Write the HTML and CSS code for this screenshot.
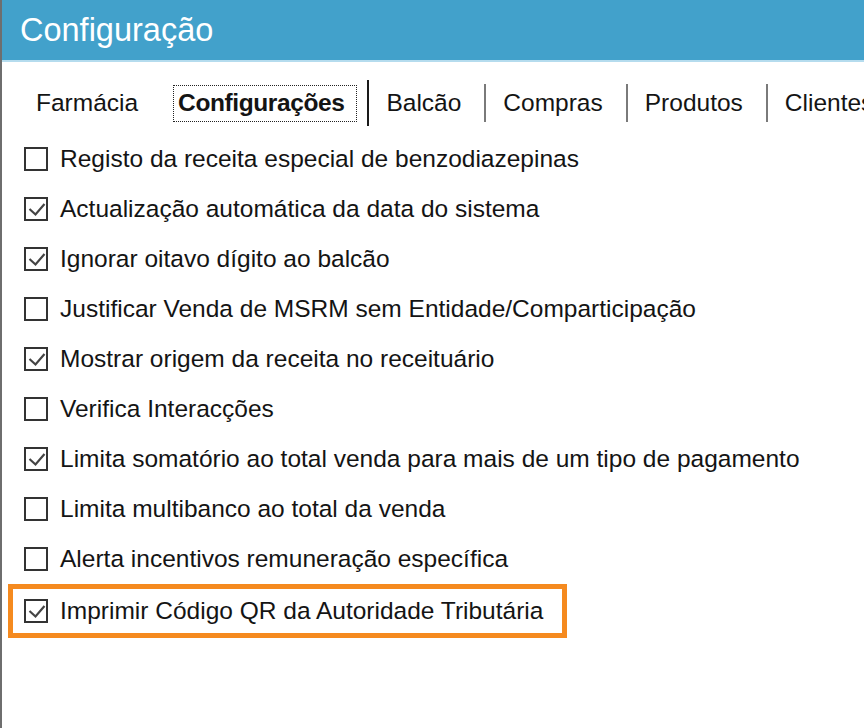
FILE: index.html
```html
<!DOCTYPE html>
<html lang="pt">
<head>
<meta charset="utf-8">
<title>Configuração</title>
<link rel="stylesheet" href="styles.css">
</head>
<body>
<div class="window">
  <header class="titlebar">Configuração</header>
  <nav class="tabs">
    <span class="tab first">Farmácia</span>
    <span class="tab active"><span class="focus">Configurações</span></span>
    <span class="sep dark"></span>
    <span class="tab">Balcão</span>
    <span class="sep"></span>
    <span class="tab">Compras</span>
    <span class="sep"></span>
    <span class="tab">Produtos</span>
    <span class="sep"></span>
    <span class="tab">Clientes</span>
  </nav>
  <ul class="options">
    <li class="opt"><span class="box"></span><span class="label">Registo da receita especial de benzodiazepinas</span></li>
    <li class="opt"><span class="box checked"><svg viewBox="0 0 20 20"><polyline points="3.5,10 9.5,15.5 18.5,5"/></svg></span><span class="label">Actualização automática da data do sistema</span></li>
    <li class="opt"><span class="box checked"><svg viewBox="0 0 20 20"><polyline points="3.5,10 9.5,15.5 18.5,5"/></svg></span><span class="label">Ignorar oitavo dígito ao balcão</span></li>
    <li class="opt"><span class="box"></span><span class="label">Justificar Venda de MSRM sem Entidade/Comparticipação</span></li>
    <li class="opt"><span class="box checked"><svg viewBox="0 0 20 20"><polyline points="3.5,10 9.5,15.5 18.5,5"/></svg></span><span class="label">Mostrar origem da receita no receituário</span></li>
    <li class="opt"><span class="box"></span><span class="label">Verifica Interacções</span></li>
    <li class="opt"><span class="box checked"><svg viewBox="0 0 20 20"><polyline points="3.5,10 9.5,15.5 18.5,5"/></svg></span><span class="label">Limita somatório ao total venda para mais de um tipo de pagamento</span></li>
    <li class="opt"><span class="box"></span><span class="label">Limita multibanco ao total da venda</span></li>
    <li class="opt"><span class="box"></span><span class="label">Alerta incentivos remuneração específica</span></li>
    <li class="opt highlight"><span class="box checked"><svg viewBox="0 0 20 20"><polyline points="3.5,10 9.5,15.5 18.5,5"/></svg></span><span class="label">Imprimir Código QR da Autoridade Tributária</span></li>
  </ul>
</div>
</body>
</html>
```

FILE: styles.css
```css
html, body {
  margin: 0;
  padding: 0;
  background: #ffffff;
}

.window {
  height: 728px;
  border-left: 2px solid #6e6e6e;
  box-sizing: border-box;
  overflow: hidden;
  font-family: "Liberation Sans", Arial, sans-serif;
  color: #141414;
}

.titlebar {
  height: 60px;
  background: #42a1cb;
  border-bottom: 2px solid #b5dcee;
  color: #ffffff;
  font-size: 32.5px;
  line-height: 60px;
  padding-left: 18px;
  box-sizing: content-box;
}

.tabs {
  display: flex;
  align-items: center;
  height: 72px;
  box-sizing: border-box;
  padding: 10px 0 0 34px;
  font-size: 24.5px;
  white-space: nowrap;
  overflow: hidden;
}

.tabs > * {
  flex: none;
}

.tab {
  display: inline-block;
}

.tab.first {
  margin-right: 35px;
}

.tab.active .focus {
  display: inline-block;
  font-weight: bold;
  letter-spacing: -0.4px;
  padding: 3px 12px 4px 4px;
  border: 1px dotted #222;
}

.sep {
  width: 2px;
  height: 38px;
  background: #7a7a7a;
  margin: 0 17px 0 23px;
}

.sep.dark {
  height: 46px;
  background: #1a1a1a;
  margin-left: 10px;
}

.options {
  list-style: none;
  margin: 0;
  padding: 0;
}

.opt {
  display: flex;
  align-items: center;
  height: 50px;
  padding-left: 22px;
  font-size: 24.5px;
  box-sizing: border-box;
}

.box {
  width: 24px;
  height: 24px;
  box-sizing: border-box;
  border: 2px solid #333333;
  background: #ffffff;
  margin-right: 12px;
  flex: none;
}

.box svg {
  display: block;
  width: 20px;
  height: 20px;
}

.box polyline {
  fill: none;
  stroke: #444444;
  stroke-width: 2.2;
}

.label {
  white-space: nowrap;
}

.highlight {
  width: 559px;
  height: 54px;
  margin-left: 6px;
  padding-left: 11px;
  border: 5px solid #f58a1f;
}
```
